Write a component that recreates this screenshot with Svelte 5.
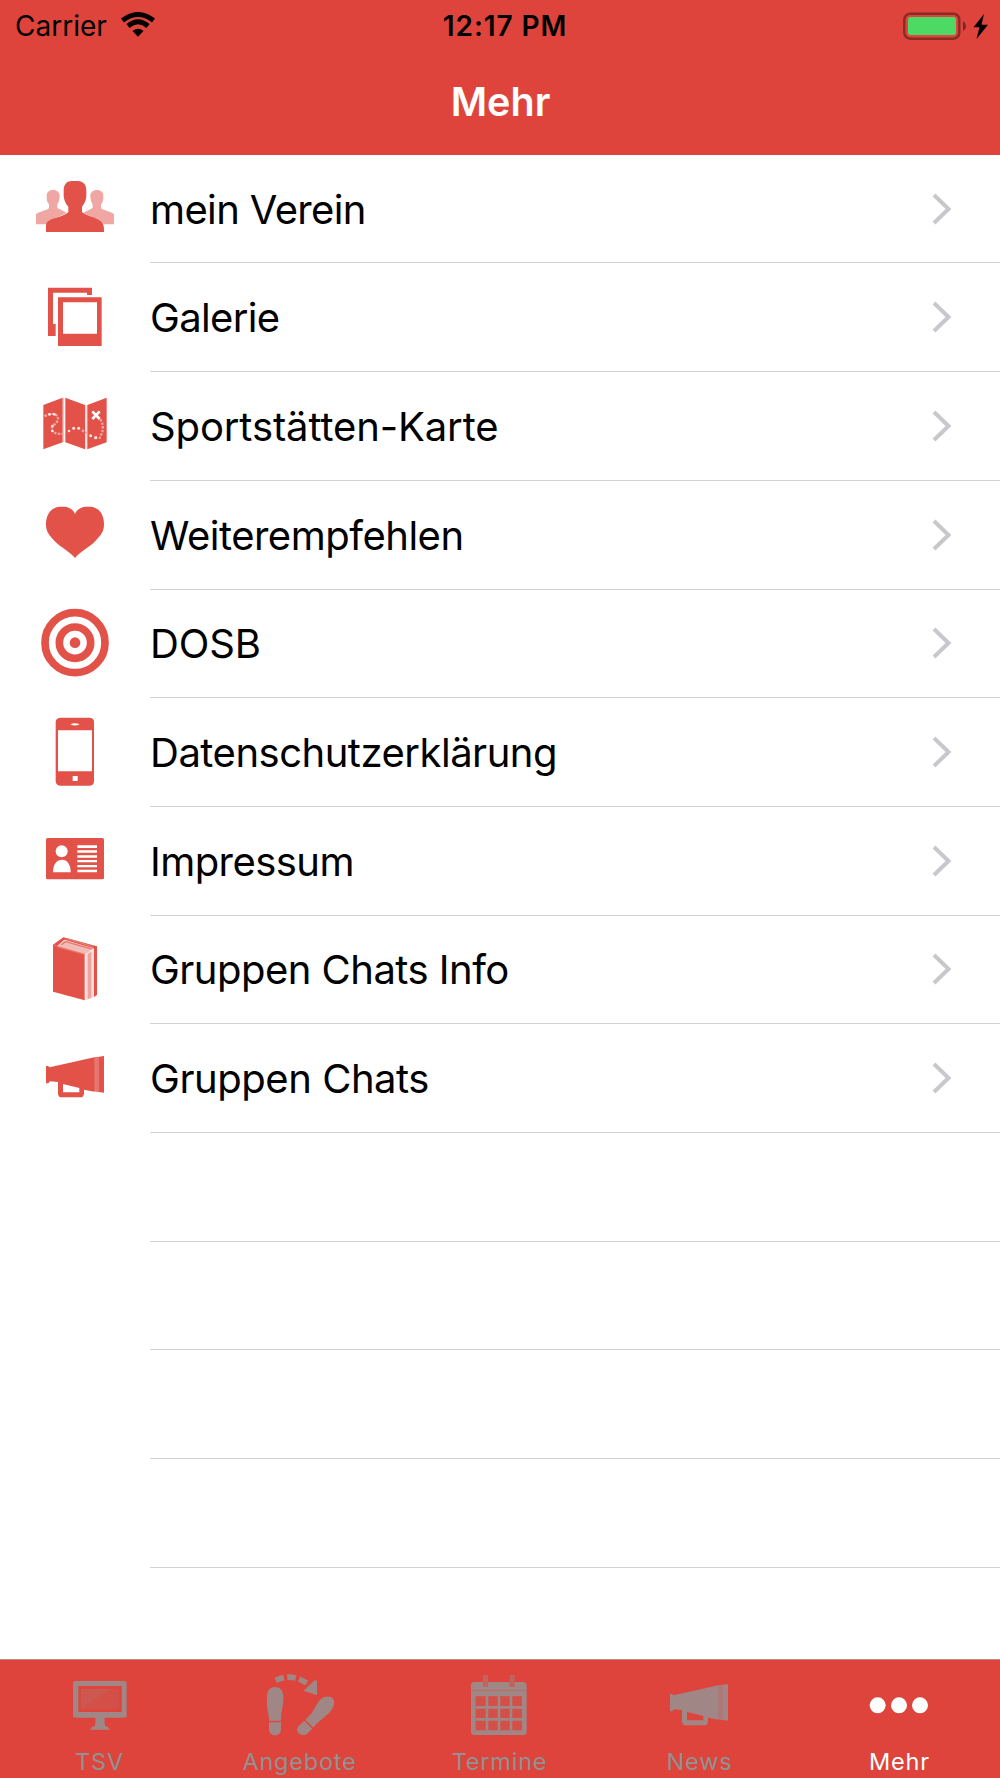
<script>
	const entries = [
		{ title: 'mein Verein', icon: 'people', x: 30, y: 39, spacing: -0.64 },
		{ title: 'Galerie', icon: 'gallery', x: 30, y: 365, spacing: -0.65 },
		{ title: 'Sportstätten-Karte', icon: 'map', x: 30, y: 31, spacing: -0.12 },
		{ title: 'Weiterempfehlen', icon: 'heart', x: 30, y: 357, spacing: -0.49 },
		{ title: 'DOSB', icon: 'target', x: 30, y: 53, spacing: -0.15 },
		{ title: 'Datenschutzerklärung', icon: 'phone', x: 30, y: 379, spacing: -0.49 },
		{ title: 'Impressum', icon: 'card', x: 30, y: 15, spacing: -0.56 },
		{ title: 'Gruppen Chats Info', icon: 'book', x: 30, y: 341, spacing: -0.52 },
		{ title: 'Gruppen Chats', icon: 'megaphone', x: 30, y: 667, spacing: -0.45 }
	];
	const emptyRows = [1, 2, 3, 4];

	const tabs = [
		{ title: 'TSV', icon: 'monitor', x: 165, y: 90 },
		{ title: 'Angebote', icon: 'steps', x: 765, y: 90 },
		{ title: 'Termine', icon: 'calendar', x: -135, y: 90 },
		{ title: 'News', icon: 'megaphone', x: 33, y: 664 },
		{ title: 'Mehr', icon: 'more', x: 1065, y: 90 }
	];

	let activeTab = $state('Mehr');
</script>

{#snippet icon(name, x, y)}
	<svg class="icon" viewBox="{x} {y} 270 216" fill="currentColor">
		{#if name === 'people'}
			<g opacity="0.5">
				<path d="M80 110C79 97 87 90 99 90S120 97 119 110C118 122 115 128 112 133V144L140 158L128 165L90 181L78 193H48V163C56 155 76 153 87 145V133C82 128 80 121 80 110Z" />
				<path d="M250 110C251 97 243 90 231 90S210 97 211 110C212 122 215 128 218 133V144L190 158L202 165L240 181L252 193H282V163C274 155 254 153 243 145V133C248 128 250 121 250 110Z" />
			</g>
			<path d="M131 95C130 72 141 63 156 63H174C190 64 200 74 199 95V110C197 124 192 132 186 140V156C201 169 228 171 243 184Q253 191 252 216H78V196C79 184 88 180 103 175C119 169 135 167 145 156V140C136 131 132 119 131 108Z" />
		{:else if name === 'gallery'}
			<path d="M84 382H216V404H201V397H99V491H107V527H84Z" />
			<path fill-rule="evenodd" d="M114 411H245V557H114ZM129 426V520H231V426Z" />
		{:else if name === 'map'}
			<path d="M70 76L128 54V188L70 209ZM136 54L195 76V209L136 188ZM202 76L260 54V188L202 209Z" />
			<path d="M131 54V188M198 76V209" stroke="#f3bbb7" stroke-width="3" fill="none" />
			<path d="M74 110C91 98 116 101 114 119C111 134 92 137 96 151C101 162 119 164 131 162" fill="none" stroke="#f1aaa5" stroke-width="7" stroke-dasharray="7 4" />
			<g fill="#fff" opacity="0.85">
				<circle cx="89" cy="104" r="4" /><circle cx="103" cy="104" r="4" /><circle cx="97" cy="139" r="4" />
				<circle cx="97" cy="154" r="4" /><circle cx="147" cy="154" r="4" /><circle cx="161" cy="146" r="4.5" />
				<circle cx="176" cy="146" r="4.5" /><circle cx="212" cy="168" r="4.5" /><circle cx="227" cy="174" r="5" />
			</g>
			<path d="M186 152L205 164M233 111C250 125 252 146 244 164L238 177" fill="none" stroke="#f1aaa5" stroke-width="7" stroke-dasharray="7 4" />
			<path d="M217 95L239 118M239 95L217 118" fill="none" stroke="#fff" stroke-width="8" />
		{:else if name === 'heart'}
			<path d="M165 534C150 514 125 505 103 482C86 465 78 452 78 435C77 402 96 381 119 380H136C150 382 161 391 165 402C169 391 180 382 194 380H211C235 381 253 402 252 435C252 452 244 465 227 482C205 505 180 514 165 534Z" />
		{:else if name === 'target'}
			<g fill="none" stroke="currentColor" stroke-width="23">
				<circle cx="165" cy="157" r="90" />
				<circle cx="165" cy="157" r="47" />
			</g>
			<circle cx="165" cy="157" r="16" />
		{:else if name === 'phone'}
			<path fill-rule="evenodd" d="M120 381H210Q222 382 222 394V572Q222 584 210 585H120Q108 584 107 572V394Q108 382 120 381ZM114 419V542H216V419ZM151 401Q165 394 179 401Q165 408 151 401ZM158 556V571H173V556Z" />
		{:else if name === 'card'}
			<rect x="78" y="54" width="174" height="124" rx="5" />
			<g fill="#fff">
				<circle cx="125" cy="94" r="18" />
				<path d="M99 157C99 136 107 126 114 122Q126 116 138 122C146 128 152 138 152 157Z" />
				<path d="M172 76H231V84H172ZM172 91H231V98H172ZM172 106H231V113H172ZM172 120H231V127H172ZM172 135H231V142H172ZM172 149H231V157H172Z" />
			</g>
		{:else if name === 'book'}
			<path d="M99 373L194 401V540L99 514Z" />
			<path d="M99 373L130 351L231 378V524L222 530V385L133 358L112 377Z" />
			<path d="M112 379L132 359L222 384L196 402Z" fill="#f3bbb7" />
			<path d="M124 373L137 364L215 386M112 379L194 402M137 354L219 379" stroke="#e77b74" stroke-width="4" fill="none" />
			<path d="M196 402L222 386V531L196 540Z" fill="#f9dddb" />
			<path d="M203 400L214 394V532L203 537Z" fill="#eda39e" />
		{:else if name === 'megaphone'}
			<path d="M78 736H84L89 740L223 710V813L192 807V819Q191 830 181 830H125Q115 830 114 819V784L90 782L85 788H78ZM129 790V815H178V802Z" fill-rule="evenodd" />
			<path d="M222 710L237 708V815L222 812Z" opacity="0.8" />
			<path d="M237 708L252 706V816L237 814Z" />
		{:else if name === 'monitor'}
			<path fill-rule="evenodd" d="M225 123H374Q380 124 380 130V227Q380 233 374 233H314V253Q314 259 324 261L330 269H270L276 261Q286 259 286 253V233H226Q219 233 219 227V130Q219 124 225 123ZM235 138V216H365V138Z" />
			<path d="M242 146H358V209H242Z" opacity="0.16" />
			<path d="M242 146H335C304 166 268 187 242 210Z" opacity="0.16" />
		{:else if name === 'steps'}
			<path d="M801 164C804 148 813 141 826 141C841 141 850 153 850 170C852 191 843 211 843 242L808 243C806 217 798 199 801 179ZM807 247H843V270Q840 286 826 286Q808 286 807 270Z" />
			<path d="M1002 181C998 171 988 169 978 170C963 172 956 183 949 196C940 213 930 228 916 239L940 263C951 249 965 238 980 225C996 213 1004 199 1002 181ZM913 242L937 266L921 281C913 288 901 285 895 279C889 271 892 261 899 255Z" />
			<path d="M827 121Q875 98 921 130" fill="none" stroke="currentColor" stroke-width="17" stroke-dasharray="26 10" />
			<path d="M944 121Q952 120 951 130V166L910 152Z" />
		{:else if name === 'calendar'}
			<path d="M-51 105H-36V140H-51ZM29 105H44V140H29Z" opacity="0.5" />
			<path fill-rule="evenodd" d="M-81 126H-51V140H-36V126H29V140H44V126H73L80 132V279L74 285H-81L-87 279V132ZM-73 169V271H66V169Z" />
			<path d="M-73 169H66V271H-73Z" opacity="0.16" />
			<path d="M-73 202H66M-73 238H66M-39 169V271M-3 169V271M33 169V271" fill="none" stroke="currentColor" stroke-width="8" />
			<path d="M-87 151H80" stroke="#b66b68" stroke-width="3" />
		{:else if name === 'more'}
			<circle cx="1133" cy="196" r="24" /><circle cx="1197" cy="196" r="24" /><circle cx="1260" cy="196" r="24" />
		{/if}
	</svg>
{/snippet}

<div class="screen">
	<header>
		<div class="status">
			<div class="carrier">
				<span>Carrier</span>
				<svg width="34" height="25" viewBox="0 0 34 25">
					<path d="M1.5 8.5Q17-3.5 32.5 8.5" fill="none" stroke="#000" stroke-width="5" />
					<path d="M7 14Q17 5.5 27 14" fill="none" stroke="#000" stroke-width="5" />
					<path d="M11.5 19Q17 14.5 22.5 19L17 24.7Z" />
				</svg>
			</div>
			<div class="time">12:17 PM</div>
			<div class="power">
				<svg width="86" height="30" viewBox="903 9 86 30">
					<rect x="904.3" y="11.7" width="55" height="25" rx="6" fill="none" stroke="#8a2a25" stroke-width="2.4" />
					<rect x="908" y="15" width="48" height="18" rx="2.8" fill="#4cd964" />
					<path d="M963 19Q966 21 966 24T963 29Z" fill="#7a2521" />
					<path d="M984 12L973.5 25.2H979.5L976.5 37L988 22.7H981.5Z" />
				</svg>
			</div>
		</div>
		<h1>Mehr</h1>
	</header>

	<main>
		{#each entries as entry}
			<div class="row">
				<div class="symbol">{@render icon(entry.icon, entry.x, entry.y)}</div>
				<div class="cell">
					<span style="letter-spacing: {entry.spacing}px">{entry.title}</span>
					<svg class="chevron" width="20" height="32" viewBox="0 0 20 32">
						<path d="M2 2L16.5 16L2 30" fill="none" stroke="#c7c7cc" stroke-width="4" />
					</svg>
				</div>
			</div>
		{/each}
		{#each emptyRows as row (row)}
			<div class="row">
				<div class="symbol"></div>
				<div class="cell"></div>
			</div>
		{/each}
	</main>

	<nav>
		{#each tabs as tab}
			<button class:active={activeTab === tab.title} onclick={() => (activeTab = tab.title)}>
				{@render icon(tab.icon, tab.x, tab.y)}
				<span>{tab.title}</span>
			</button>
		{/each}
	</nav>
</div>

<style>
	:global(body) {
		background: #fff;
	}

	.screen {
		width: 1000px;
		height: 1778px;
		display: flex;
		flex-direction: column;
		overflow: hidden;
		font-family: Inter, 'Liberation Sans', sans-serif;
		color: #000;
	}

	header {
		height: 154.75px;
		flex: none;
		background: #de443c;
	}

	.status {
		height: 51px;
		display: grid;
		grid-template-columns: 1fr auto 1fr;
		align-items: center;
		padding: 0 11px 0 15px;
		box-sizing: border-box;
		font-size: 28px;
		line-height: 34px;
	}

	.carrier {
		display: flex;
		align-items: center;
		gap: 14px;
	}

	.carrier svg {
		margin-top: -2px;
	}

	.time {
		font-weight: 600;
		margin-left: 6px;
		letter-spacing: 0.9px;
	}

	.power {
		display: flex;
		justify-content: flex-end;
	}

	h1 {
		margin: 0;
		padding-top: 26px;
		padding-left: 1px;
		font-size: 39.5px;
		line-height: 50px;
		font-weight: 600;
		text-align: center;
		color: #fff;
	}

	main {
		flex: 1;
		min-height: 0;
	}

	.row {
		height: 108.7px;
		display: flex;
	}

	.symbol {
		width: 150px;
		display: flex;
		align-items: center;
		justify-content: center;
		color: #e25249;
	}

	.icon {
		display: block;
		width: 90px;
		height: 72px;
	}

	.cell {
		flex: 1;
		display: flex;
		align-items: center;
		justify-content: space-between;
		padding: 2px 48px 0 0;
		border-bottom: 1px solid #d2d2d5;
		font-size: 40px;
		line-height: 50px;
		white-space: nowrap;
	}

	.chevron {
		margin-bottom: 2px;
	}

	nav {
		height: 118px;
		flex: none;
		display: grid;
		grid-template-columns: repeat(5, 1fr);
		border-top: 1px solid #b98a88;
		background: #de443c;
	}

	button {
		display: flex;
		flex-direction: column;
		align-items: center;
		padding: 10px 0 0;
		border: none;
		background: none;
		font: inherit;
		font-size: 23.5px;
		line-height: 30px;
		letter-spacing: 0.8px;
		color: #a08684;
		cursor: pointer;
	}

	button span {
		margin-top: 5px;
		margin-right: 1px;
		color: #929292;
	}

	button.active,
	button.active span {
		color: #fff;
	}
</style>
